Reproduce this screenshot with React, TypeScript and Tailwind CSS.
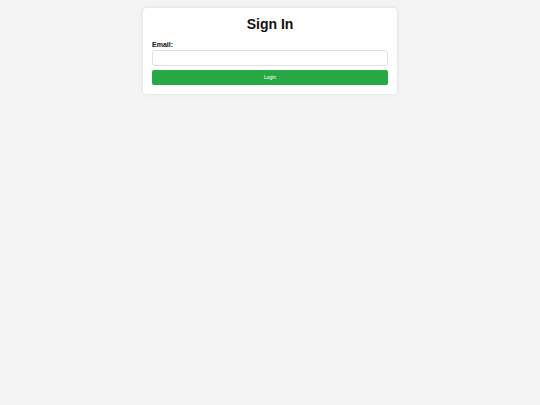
export default function App() {
  return (
    <div className="min-h-[405px] w-full bg-[#f4f4f4] flex justify-center pt-[8px]" style={{ fontFamily: '"Liberation Sans", Arial, sans-serif' }}>
      <div className="w-[254px] h-[86px] bg-white rounded-[4px] shadow-[0_0_4px_rgba(0,0,0,0.1)] px-[9px] pt-[7px]">
        <h1 className="text-center text-[14px] leading-[18px] font-bold text-[#111]">Sign In</h1>
        <label className="block mt-[8px] text-[7px] leading-[8px] font-bold text-[#111]">Email:</label>
        <input className="block mt-[1px] w-full h-[16px] border border-[#e0e0e0] rounded-[3px] bg-white outline-none" />
        <button className="block mt-[4px] w-full h-[15px] bg-[#28a745] rounded-[2px] text-white text-[5px] leading-[15px]">Login</button>
      </div>
    </div>
  );
}
